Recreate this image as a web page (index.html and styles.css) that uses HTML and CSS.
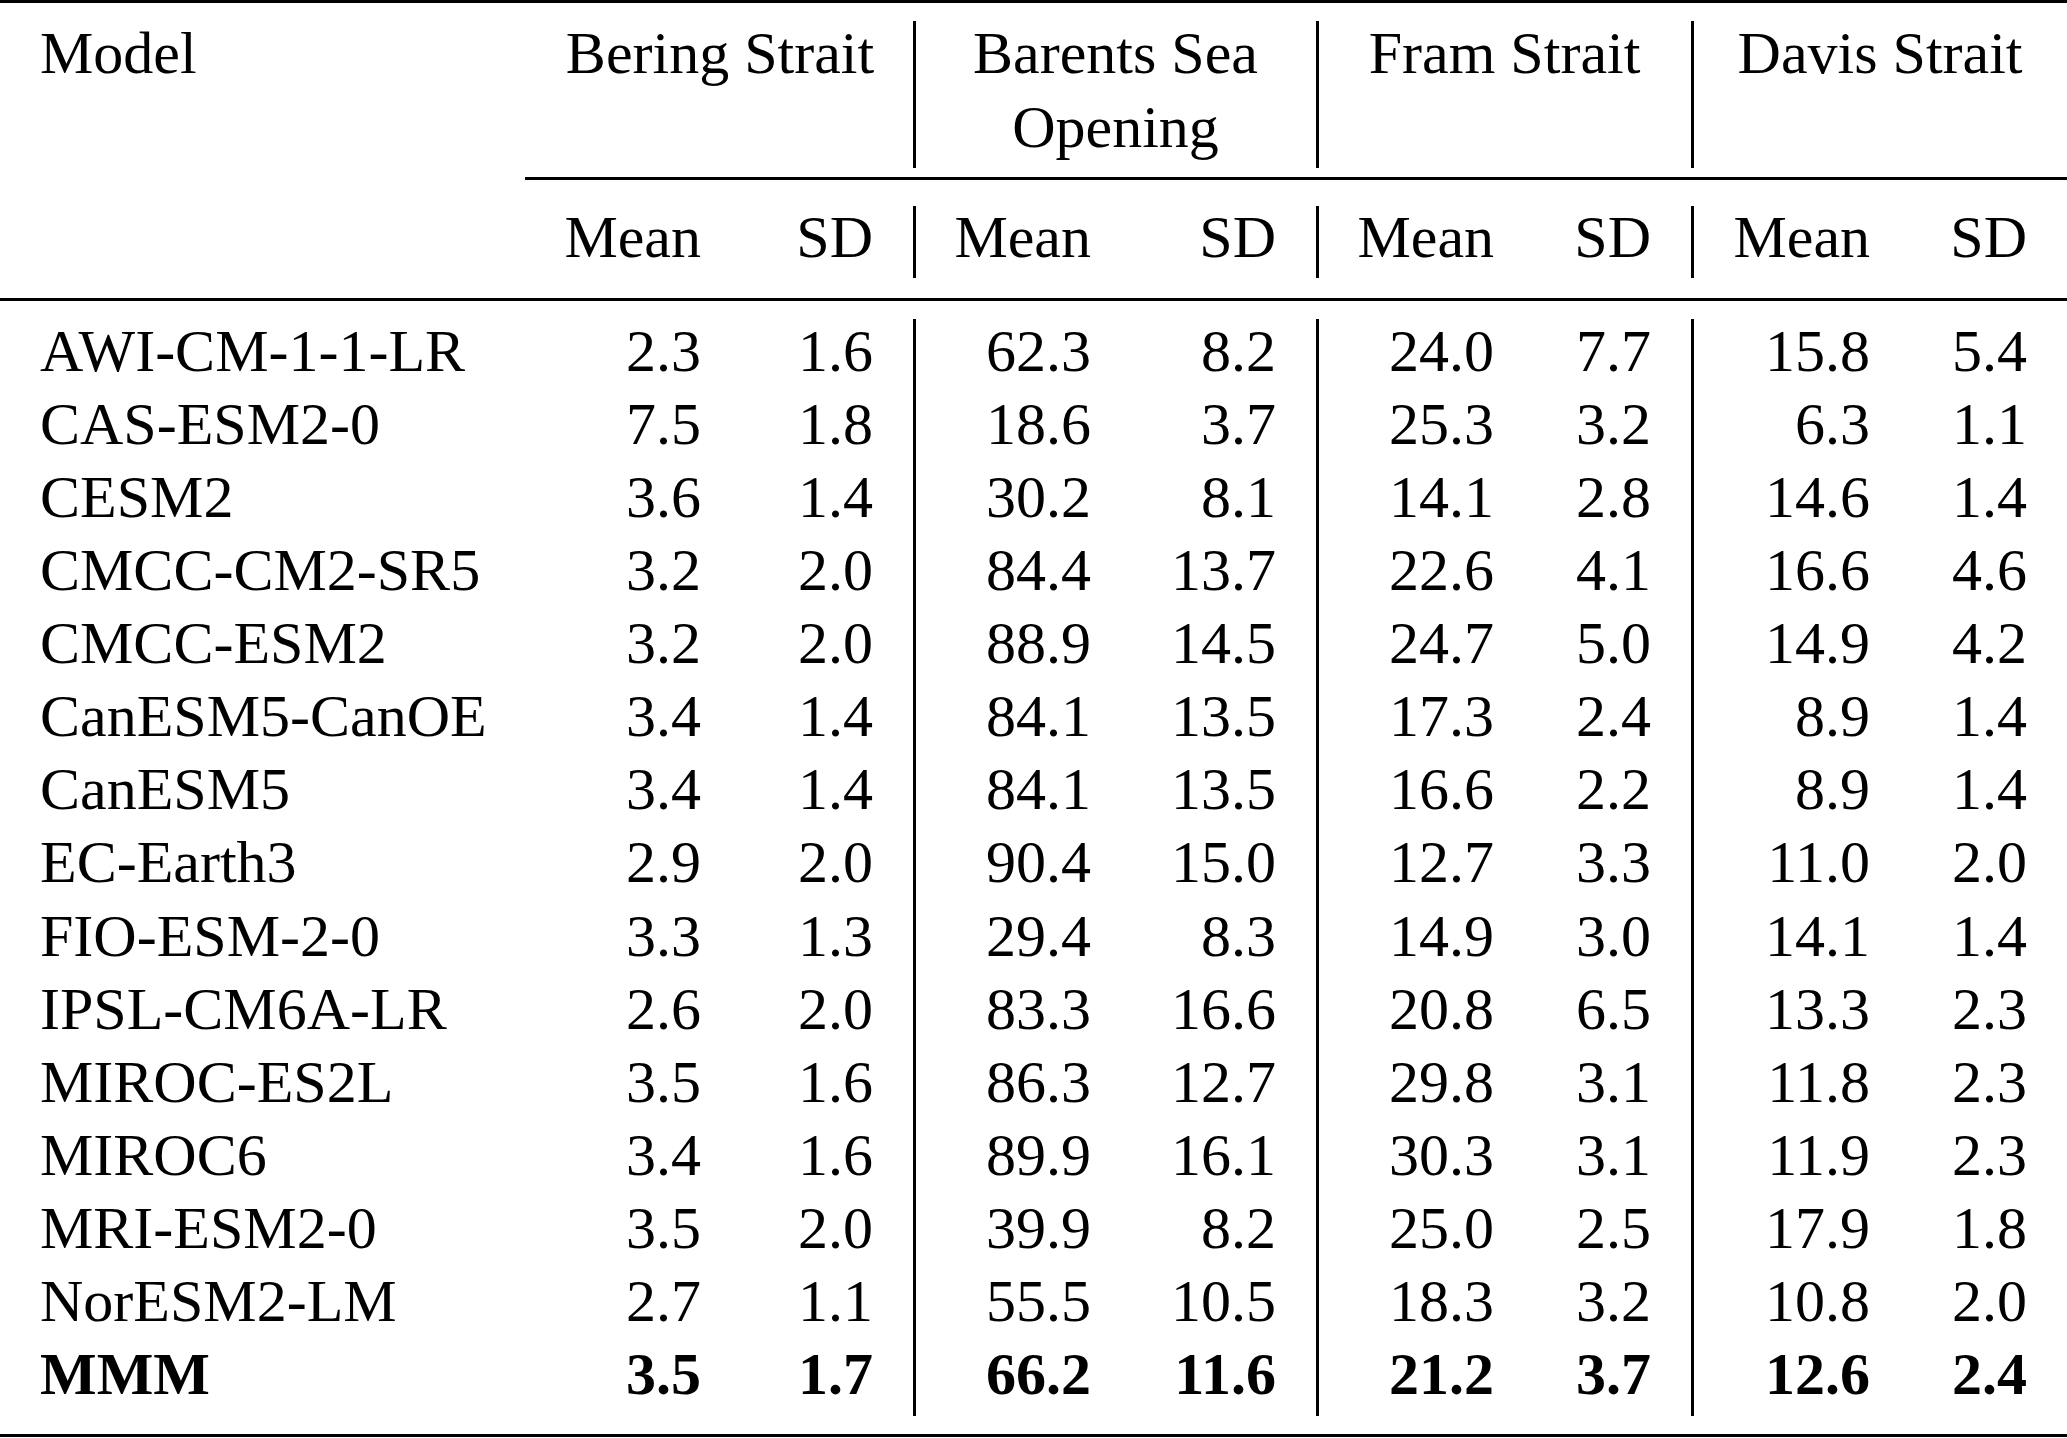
FILE: index.html
```html
<!DOCTYPE html>
<html>
<head>
<meta charset="utf-8">
<link rel="stylesheet" href="styles.css">
</head>
<body>
<table class="tbl">
  <colgroup>
    <col class="c-model">
    <col class="c-m1"><col class="c-s1">
    <col class="c-m2"><col class="c-s2">
    <col class="c-m3"><col class="c-s3">
    <col class="c-m4"><col class="c-s4">
  </colgroup>
  <thead>
    <tr class="h1">
      <th class="model">Model</th>
      <th colspan="2" class="grp">Bering Strait</th>
      <th colspan="2" class="grp vl">Barents Sea<br>Opening</th>
      <th colspan="2" class="grp vl">Fram Strait</th>
      <th colspan="2" class="grp vl">Davis Strait</th>
    </tr>
    <tr class="h2">
      <th class="model"></th>
      <th class="num cm">Mean</th><th class="num cm">SD</th>
      <th class="num cm vl">Mean</th><th class="num cm">SD</th>
      <th class="num cm vl">Mean</th><th class="num cm">SD</th>
      <th class="num cm vl">Mean</th><th class="num cm">SD</th>
    </tr>
  </thead>
  <tbody>
    <tr class="first"><td class="model">AWI-CM-1-1-LR</td><td class="num">2.3</td><td class="num">1.6</td><td class="num vl">62.3</td><td class="num">8.2</td><td class="num vl">24.0</td><td class="num">7.7</td><td class="num vl">15.8</td><td class="num">5.4</td></tr>
    <tr><td class="model">CAS-ESM2-0</td><td class="num">7.5</td><td class="num">1.8</td><td class="num vl">18.6</td><td class="num">3.7</td><td class="num vl">25.3</td><td class="num">3.2</td><td class="num vl">6.3</td><td class="num">1.1</td></tr>
    <tr><td class="model">CESM2</td><td class="num">3.6</td><td class="num">1.4</td><td class="num vl">30.2</td><td class="num">8.1</td><td class="num vl">14.1</td><td class="num">2.8</td><td class="num vl">14.6</td><td class="num">1.4</td></tr>
    <tr><td class="model">CMCC-CM2-SR5</td><td class="num">3.2</td><td class="num">2.0</td><td class="num vl">84.4</td><td class="num">13.7</td><td class="num vl">22.6</td><td class="num">4.1</td><td class="num vl">16.6</td><td class="num">4.6</td></tr>
    <tr><td class="model">CMCC-ESM2</td><td class="num">3.2</td><td class="num">2.0</td><td class="num vl">88.9</td><td class="num">14.5</td><td class="num vl">24.7</td><td class="num">5.0</td><td class="num vl">14.9</td><td class="num">4.2</td></tr>
    <tr><td class="model">CanESM5-CanOE</td><td class="num">3.4</td><td class="num">1.4</td><td class="num vl">84.1</td><td class="num">13.5</td><td class="num vl">17.3</td><td class="num">2.4</td><td class="num vl">8.9</td><td class="num">1.4</td></tr>
    <tr><td class="model">CanESM5</td><td class="num">3.4</td><td class="num">1.4</td><td class="num vl">84.1</td><td class="num">13.5</td><td class="num vl">16.6</td><td class="num">2.2</td><td class="num vl">8.9</td><td class="num">1.4</td></tr>
    <tr><td class="model">EC-Earth3</td><td class="num">2.9</td><td class="num">2.0</td><td class="num vl">90.4</td><td class="num">15.0</td><td class="num vl">12.7</td><td class="num">3.3</td><td class="num vl">11.0</td><td class="num">2.0</td></tr>
    <tr><td class="model">FIO-ESM-2-0</td><td class="num">3.3</td><td class="num">1.3</td><td class="num vl">29.4</td><td class="num">8.3</td><td class="num vl">14.9</td><td class="num">3.0</td><td class="num vl">14.1</td><td class="num">1.4</td></tr>
    <tr><td class="model">IPSL-CM6A-LR</td><td class="num">2.6</td><td class="num">2.0</td><td class="num vl">83.3</td><td class="num">16.6</td><td class="num vl">20.8</td><td class="num">6.5</td><td class="num vl">13.3</td><td class="num">2.3</td></tr>
    <tr><td class="model">MIROC-ES2L</td><td class="num">3.5</td><td class="num">1.6</td><td class="num vl">86.3</td><td class="num">12.7</td><td class="num vl">29.8</td><td class="num">3.1</td><td class="num vl">11.8</td><td class="num">2.3</td></tr>
    <tr><td class="model">MIROC6</td><td class="num">3.4</td><td class="num">1.6</td><td class="num vl">89.9</td><td class="num">16.1</td><td class="num vl">30.3</td><td class="num">3.1</td><td class="num vl">11.9</td><td class="num">2.3</td></tr>
    <tr><td class="model">MRI-ESM2-0</td><td class="num">3.5</td><td class="num">2.0</td><td class="num vl">39.9</td><td class="num">8.2</td><td class="num vl">25.0</td><td class="num">2.5</td><td class="num vl">17.9</td><td class="num">1.8</td></tr>
    <tr><td class="model">NorESM2-LM</td><td class="num">2.7</td><td class="num">1.1</td><td class="num vl">55.5</td><td class="num">10.5</td><td class="num vl">18.3</td><td class="num">3.2</td><td class="num vl">10.8</td><td class="num">2.0</td></tr>
    <tr class="last mmm"><td class="model">MMM</td><td class="num">3.5</td><td class="num">1.7</td><td class="num vl">66.2</td><td class="num">11.6</td><td class="num vl">21.2</td><td class="num">3.7</td><td class="num vl">12.6</td><td class="num">2.4</td></tr>
  </tbody>
</table>
</body>
</html>
```

FILE: styles.css
```css
html, body {
  margin: 0;
  padding: 0;
  background: #fff;
}

.tbl {
  font-family: "Liberation Serif", "Times New Roman", serif;
  font-size: 60px;
  color: #000;
  border-collapse: separate;
  border-spacing: 0;
  table-layout: fixed;
  width: 2067px;
  border-top: 3px solid #000;
  border-bottom: 3px solid #000;
}

.c-model { width: 525px; }
.c-m1 { width: 216px; }
.c-s1 { width: 172px; }
.c-m2 { width: 218px; }
.c-s2 { width: 185px; }
.c-m3 { width: 218px; }
.c-s3 { width: 157px; }
.c-m4 { width: 219px; }
.c-s4 { width: 157px; }

.tbl th,
.tbl td {
  padding: 0;
  font-weight: normal;
  white-space: nowrap;
}

.model {
  text-align: left;
  padding-left: 40px !important;
}

.num {
  text-align: right;
  padding-right: 40px !important;
}

/* vertical rules drawn as backgrounds so they can stop short of the horizontal rules */
.vl {
  background-image: linear-gradient(#000, #000);
  background-repeat: no-repeat;
  background-size: 3px 100%;
  background-position: left top;
}

/* header row 1 */
.h1 th {
  line-height: 74px;
  padding-top: 13px;
  padding-bottom: 13px;
  vertical-align: top;
}
.h1 .grp {
  text-align: center;
  padding-left: 2px;
}
.h1 .vl {
  background-size: 3px 147px;
  background-position: left 0 top 18px;
}

/* header row 2 */
.h2 th {
  line-height: 74px;
  padding-top: 20px;
  padding-bottom: 24px;
  vertical-align: top;
  border-bottom: 3px solid #000;
}
.h2 .cm {
  border-top: 3px solid #000;
}
.h2 .vl {
  background-size: 3px 72px;
  background-position: left 0 top 26px;
}

/* body */
.tbl tbody td {
  line-height: 73.07px;
  vertical-align: top;
}
.tbl tbody tr.first td {
  padding-top: 14px;
}
.tbl tbody tr.first .vl {
  background-size: 3px calc(100% - 18px);
  background-position: left bottom;
}
.tbl tbody tr.last td {
  padding-bottom: 23px;
}
.tbl tbody tr.last .vl {
  background-size: 3px calc(100% - 18px);
  background-position: left top;
}

.mmm td {
  font-weight: bold;
}
```
